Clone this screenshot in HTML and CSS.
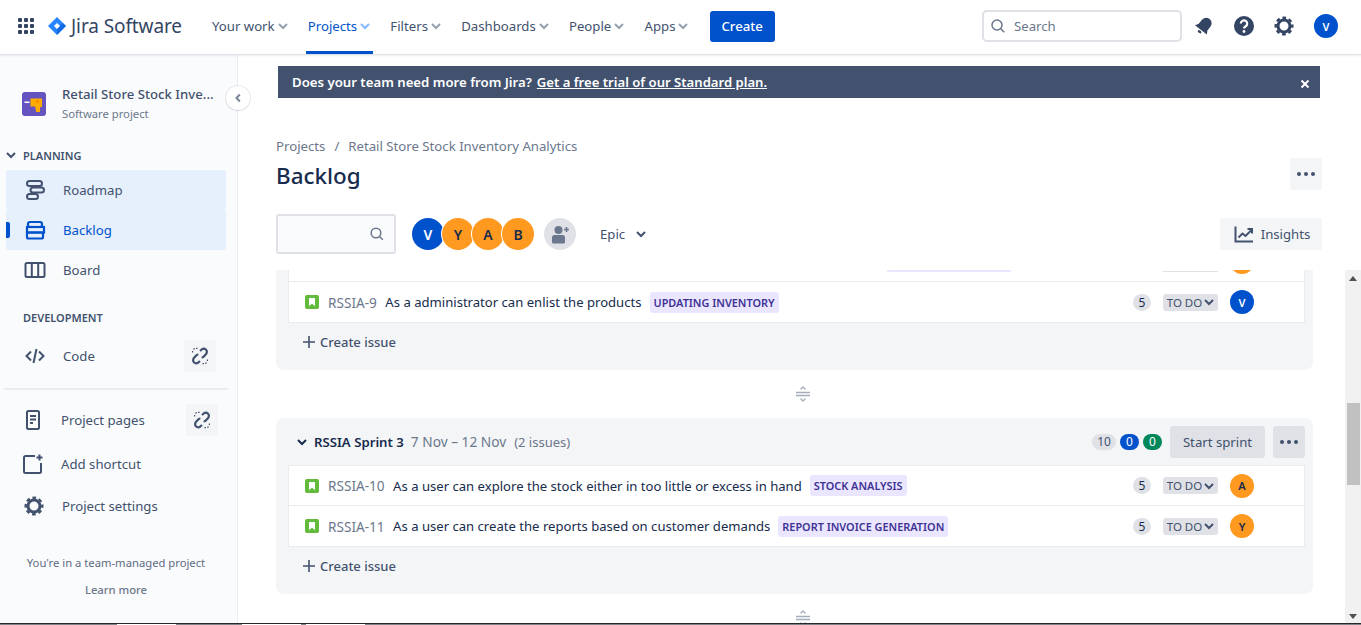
FILE: index.html
```html
<!DOCTYPE html>
<html lang="en">
<head>
<meta charset="utf-8">
<title>Backlog - Jira Software</title>
<link rel="stylesheet" href="styles.css">
</head>
<body>
<header class="topbar">
  <svg class="apps-icon" width="16" height="16" viewBox="0 0 16 16"><g fill="#344563"><rect x="0" y="0" width="4" height="4" rx="1"/><rect x="6" y="0" width="4" height="4" rx="1"/><rect x="12" y="0" width="4" height="4" rx="1"/><rect x="0" y="6" width="4" height="4" rx="1"/><rect x="6" y="6" width="4" height="4" rx="1"/><rect x="12" y="6" width="4" height="4" rx="1"/><rect x="0" y="12" width="4" height="4" rx="1"/><rect x="6" y="12" width="4" height="4" rx="1"/><rect x="12" y="12" width="4" height="4" rx="1"/></g></svg>
  <div class="brand">
    <svg width="18" height="18" viewBox="0 0 18 18"><path d="M9 0l9 9-9 9-9-9z" fill="#2684ff"/><path d="M9 18l9-9-3-3-6 6z" fill="#0052cc" opacity=".55"/><path d="M9 6l3 3-3 3-3-3z" fill="#fff"/></svg>
    <span class="brand-name">Jira Software</span>
  </div>
  <nav class="topnav">
    <a class="topnav-item">Your work<svg class="chev" width="12" height="12" viewBox="0 0 12 12"><path d="M2 4l4 4 4-4" fill="none" stroke="#97a0af" stroke-width="2"/></svg></a>
    <a class="topnav-item is-active">Projects<svg class="chev" width="12" height="12" viewBox="0 0 12 12"><path d="M2 4l4 4 4-4" fill="none" stroke="#85b8ff" stroke-width="2"/></svg></a>
    <a class="topnav-item">Filters<svg class="chev" width="12" height="12" viewBox="0 0 12 12"><path d="M2 4l4 4 4-4" fill="none" stroke="#97a0af" stroke-width="2"/></svg></a>
    <a class="topnav-item">Dashboards<svg class="chev" width="12" height="12" viewBox="0 0 12 12"><path d="M2 4l4 4 4-4" fill="none" stroke="#97a0af" stroke-width="2"/></svg></a>
    <a class="topnav-item">People<svg class="chev" width="12" height="12" viewBox="0 0 12 12"><path d="M2 4l4 4 4-4" fill="none" stroke="#97a0af" stroke-width="2"/></svg></a>
    <a class="topnav-item">Apps<svg class="chev" width="12" height="12" viewBox="0 0 12 12"><path d="M2 4l4 4 4-4" fill="none" stroke="#97a0af" stroke-width="2"/></svg></a>
  </nav>
  <button class="create-btn">Create</button>
  <div class="topbar-right">
    <div class="global-search">
      <svg width="16" height="16" viewBox="0 0 16 16"><circle cx="7" cy="7" r="5" fill="none" stroke="#6b778c" stroke-width="1.5"/><path d="M10.700 10.700l3.600 3.600" stroke="#6b778c" stroke-width="1.500"/></svg>
      <span>Search</span>
    </div>
    <svg class="top-icon bell" width="24" height="24" viewBox="0 0 24 24"><g fill="#344563" transform="rotate(38 12 12)"><path d="M12 3c-3.300 0-5.500 2.600-5.500 6v4.500L4.500 17h15l-2-3.500V9c0-3.400-2.200-6-5.500-6z"/><rect x="10" y="18" width="4" height="2.400" rx="1.200"/></g></svg>
    <svg class="top-icon help" width="24" height="24" viewBox="0 0 24 24"><circle cx="12" cy="12" r="10" fill="#344563"/><path d="M8.800 9.600a3.200 3.200 0 1 1 4.900 2.700c-1.100.7-1.700 1.100-1.700 2.300" fill="none" stroke="#fff" stroke-width="2.200"/><circle cx="12" cy="17.500" r="1.400" fill="#fff"/></svg>
    <svg class="top-icon gear" width="24" height="24" viewBox="0 0 24 24"><circle cx="12" cy="12" r="6" fill="none" stroke="#344563" stroke-width="3"/><circle cx="12" cy="12" r="8.300" fill="none" stroke="#344563" stroke-width="2.400" stroke-dasharray="3.700 2.820" stroke-dashoffset="1.850"/></svg>
    <span class="avatar avatar-top">V</span>
  </div>
</header>

<div class="workspace">
  <aside class="sidebar">
    <div class="project">
      <svg class="project-icon" width="24" height="24" viewBox="0 0 24 24"><rect width="24" height="24" rx="3" fill="#6554c0"/><path d="M2.500 9.500h5v1.500h-5z" fill="#fff"/><path d="M8.500 6.500h11.500v8.500h-2v5h-4l-.8-5.500h-4.700z" fill="#ffab00"/><rect x="14" y="8" width="3" height="3" fill="#ff8b00"/></svg>
      <div class="project-text">
        <div class="project-name">Retail Store Stock Inve...</div>
        <div class="project-type">Software project</div>
      </div>
    </div>
    <button class="collapse-btn" aria-label="Collapse"><svg width="10" height="10" viewBox="0 0 10 10"><path d="M6.800 1.500L3.500 5l3.300 3.500" fill="none" stroke="#7a869a" stroke-width="2"/></svg></button>

    <div class="side-heading">
      <svg class="heading-chev" width="10" height="10" viewBox="0 0 10 10"><path d="M1 3l4 4 4-4" fill="none" stroke="#42526e" stroke-width="2"/></svg>
      PLANNING
    </div>
    <a class="side-item is-selected">
      <svg class="side-icon" width="24" height="24" viewBox="0 0 24 24" fill="none" stroke="#42526e" stroke-width="2"><rect x="4" y="3" width="15" height="5" rx="2.500"/><rect x="7.500" y="9.500" width="13.500" height="5" rx="2.500"/><rect x="4" y="16" width="11" height="5" rx="2.500"/></svg>
      <span>Roadmap</span>
    </a>
    <a class="side-item is-selected is-current">
      <svg class="side-icon" width="24" height="24" viewBox="0 0 24 24" fill="none" stroke="#0052cc" stroke-width="2.200"><rect x="5" y="4" width="14" height="5" rx="2"/><rect x="4" y="9" width="17" height="5.500"/><rect x="4" y="14.500" width="16" height="6" rx="1.500"/></svg>
      <span>Backlog</span>
    </a>
    <a class="side-item">
      <svg class="side-icon" width="24" height="24" viewBox="0 0 24 24" fill="none" stroke="#42526e" stroke-width="2"><rect x="2.500" y="5" width="19" height="14" rx="1.500"/><path d="M8.800 5v14M15.200 5v14"/></svg>
      <span>Board</span>
    </a>

    <div class="side-heading side-heading-dev">DEVELOPMENT</div>
    <a class="side-item">
      <svg class="side-icon" width="24" height="24" viewBox="0 0 24 24" fill="none" stroke="#42526e" stroke-width="2"><path d="M8 7.500L3.500 12 8 16.500M16 7.500l4.500 4.500-4.500 4.500M13.500 5l-3 14"/></svg>
      <span>Code</span>
      <span class="link-box"><svg width="18" height="18" viewBox="0 0 18 18" fill="none" stroke="#42526e" stroke-width="2.200"><path d="M9 4l1.400-1.300a3.100 3.100 0 0 1 4.700 4.200l-2.300 2.600a3 3 0 0 1-2.200 1"/><path d="M9 14l-1.400 1.300a3.100 3.100 0 0 1-4.700-4.200l2.300-2.600a3 3 0 0 1 2.200-1"/><path d="M2.600 1.500l.9.900M5.800.8v1.200M1 4.800h1.200M15.400 16.500l-.9-.9M12.200 17.200V16M17 13.200h-1.200" stroke-width="1.500"/></svg></span>
    </a>

    <div class="side-divider"></div>

    <a class="side-item side-item-lower">
      <svg class="side-icon" width="24" height="24" viewBox="0 0 24 24" fill="none" stroke="#42526e" stroke-width="2"><rect x="6" y="3" width="12" height="18" rx="1.500"/><path d="M9 8h6M9 11.500h6M9 15h3"/></svg>
      <span>Project pages</span>
      <span class="link-box"><svg width="18" height="18" viewBox="0 0 18 18" fill="none" stroke="#42526e" stroke-width="2.200"><path d="M9 4l1.400-1.300a3.100 3.100 0 0 1 4.700 4.200l-2.300 2.600a3 3 0 0 1-2.200 1"/><path d="M9 14l-1.400 1.300a3.100 3.100 0 0 1-4.700-4.200l2.300-2.600a3 3 0 0 1 2.200-1"/><path d="M2.600 1.500l.9.900M5.800.8v1.200M1 4.800h1.200M15.400 16.500l-.9-.9M12.200 17.200V16M17 13.200h-1.200" stroke-width="1.500"/></svg></span>
    </a>
    <a class="side-item side-item-lower side-item-shortcut">
      <svg class="side-icon" width="24" height="24" viewBox="0 0 24 24" fill="none" stroke="#42526e" stroke-width="2"><path d="M15 4H5.500A1.500 1.500 0 0 0 4 5.500v14A1.500 1.500 0 0 0 5.500 21h14a1.500 1.500 0 0 0 1.500-1.500V11"/><path d="M19.500 2.500v6M16.500 5.500h6"/></svg>
      <span>Add shortcut</span>
    </a>
    <a class="side-item side-item-lower side-item-settings">
      <svg class="side-icon" width="24" height="24" viewBox="0 0 24 24"><circle cx="12" cy="12" r="6" fill="none" stroke="#42526e" stroke-width="3"/><circle cx="12" cy="12" r="8.300" fill="none" stroke="#42526e" stroke-width="2.400" stroke-dasharray="3.700 2.820" stroke-dashoffset="1.850"/></svg>
      <span>Project settings</span>
    </a>

    <p class="side-note">You're in a team-managed project</p>
    <p class="side-learn">Learn more</p>
  </aside>

  <main class="content">
    <div class="banner">
      <span class="banner-text">Does your team need more from Jira?</span>
      <a class="banner-link">Get a free trial of our Standard plan.</a>
      <svg class="banner-close" width="10" height="10" viewBox="0 0 10 10"><path d="M1.500 1.500l7 7M8.500 1.500l-7 7" stroke="#fff" stroke-width="2"/></svg>
    </div>

    <div class="breadcrumbs"><span>Projects</span><span class="crumb-sep">/</span><span>Retail Store Stock Inventory Analytics</span></div>

    <div class="page-head">
      <h1>Backlog</h1>
      <button class="more-btn more-light" aria-label="More"><i></i><i></i><i></i></button>
    </div>

    <div class="toolbar">
      <div class="filter-search"><svg width="16" height="16" viewBox="0 0 16 16"><circle cx="7" cy="7" r="4.800" fill="none" stroke="#6b778c" stroke-width="1.500"/><path d="M10.500 10.500l3.300 3.300" stroke="#6b778c" stroke-width="1.500"/></svg></div>
      <div class="avatar-stack">
        <span class="avatar avatar-lg avatar-blue">V</span>
        <span class="avatar avatar-lg avatar-orange">Y</span>
        <span class="avatar avatar-lg avatar-orange">A</span>
        <span class="avatar avatar-lg avatar-orange">B</span>
      </div>
      <span class="add-person"><svg width="24" height="24" viewBox="0 0 24 24"><circle cx="10.500" cy="8" r="4" fill="#6b778c"/><path d="M4 15.500a2.500 2.500 0 0 1 2.500-2.500h8a2.500 2.500 0 0 1 2.500 2.500V20a1.500 1.500 0 0 1-1.500 1.500h-10A1.500 1.500 0 0 1 4 20z" fill="#6b778c"/><path d="M18.500 5v5M16 7.500h5" stroke="#6b778c" stroke-width="1.600"/></svg></span>
      <span class="epic">Epic<svg width="12" height="12" viewBox="0 0 12 12"><path d="M2 4l4 4 4-4" fill="none" stroke="#42526e" stroke-width="2"/></svg></span>
      <button class="insights"><svg width="24" height="24" viewBox="0 0 24 24" fill="none" stroke="#42526e" stroke-width="2"><path d="M3.500 4.500V19.500H21"/><path d="M6.500 15.500l4-4 3 2.500 6-6"/><path d="M15.500 7h4.500v4.500"/></svg>Insights</button>
    </div>

    <div class="backlog-area">
      <div class="backlog-viewport">
        <div class="backlog-scroll">
          <section class="sprint sprint-clipped">
            <div class="issue">
              <span class="issue-spacer"></span>
              <span class="tag tag-clipped"></span>
              <span class="status status-clipped"></span>
              <span class="avatar avatar-orange"></span>
            </div>
            <div class="issue issue-last">
              <svg class="story" width="14" height="14" viewBox="0 0 14 14"><rect width="14" height="14" rx="2" fill="#63ba3c"/><path d="M4 3h6v8L7 8.800 4 11z" fill="#fff"/></svg>
              <span class="key">RSSIA-9</span>
              <span class="summary">As a administrator can enlist the products</span>
              <span class="tag">UPDATING INVENTORY</span>
              <span class="issue-spacer"></span>
              <span class="points">5</span>
              <span class="status">TO DO<svg width="10" height="10" viewBox="0 0 10 10"><path d="M1 3l4 4 4-4" fill="none" stroke="#42526e" stroke-width="2"/></svg></span>
              <span class="avatar avatar-blue">V</span>
            </div>
            <div class="create-issue"><svg width="14" height="14" viewBox="0 0 14 14"><path d="M7 1v12M1 7h12" stroke="#42526e" stroke-width="1.600"/></svg>Create issue</div>
          </section>

          <div class="handle"><svg width="16" height="16" viewBox="0 0 16 16" fill="none" stroke="#a5adba"><path d="M5.500 3.500L8 1l2.500 2.500M5.500 12.500L8 15l2.500-2.500" stroke-width="1.300"/><path d="M1 6.500h14M1 9.500h14" stroke-width="1.500"/></svg></div>

          <section class="sprint">
            <div class="sprint-head">
              <svg class="sprint-chev" width="10" height="10" viewBox="0 0 10 10"><path d="M1 3l4 4 4-4" fill="none" stroke="#172b4d" stroke-width="2"/></svg>
              <span class="sprint-name">RSSIA Sprint 3</span>
              <span class="sprint-dates">7 Nov – 12 Nov</span>
              <span class="sprint-count">(2 issues)</span>
              <span class="issue-spacer"></span>
              <span class="count count-grey">10</span>
              <span class="count count-blue">0</span>
              <span class="count count-green">0</span>
              <button class="start-sprint">Start sprint</button>
              <button class="more-btn more-dark" aria-label="More"><i></i><i></i><i></i></button>
            </div>
            <div class="issue">
              <svg class="story" width="14" height="14" viewBox="0 0 14 14"><rect width="14" height="14" rx="2" fill="#63ba3c"/><path d="M4 3h6v8L7 8.800 4 11z" fill="#fff"/></svg>
              <span class="key">RSSIA-10</span>
              <span class="summary">As a user can explore the stock either in too little or excess in hand</span>
              <span class="tag">STOCK ANALYSIS</span>
              <span class="issue-spacer"></span>
              <span class="points">5</span>
              <span class="status">TO DO<svg width="10" height="10" viewBox="0 0 10 10"><path d="M1 3l4 4 4-4" fill="none" stroke="#42526e" stroke-width="2"/></svg></span>
              <span class="avatar avatar-orange">A</span>
            </div>
            <div class="issue issue-last">
              <svg class="story" width="14" height="14" viewBox="0 0 14 14"><rect width="14" height="14" rx="2" fill="#63ba3c"/><path d="M4 3h6v8L7 8.800 4 11z" fill="#fff"/></svg>
              <span class="key">RSSIA-11</span>
              <span class="summary">As a user can create the reports based on customer demands</span>
              <span class="tag">REPORT INVOICE GENERATION</span>
              <span class="issue-spacer"></span>
              <span class="points">5</span>
              <span class="status">TO DO<svg width="10" height="10" viewBox="0 0 10 10"><path d="M1 3l4 4 4-4" fill="none" stroke="#42526e" stroke-width="2"/></svg></span>
              <span class="avatar avatar-orange">Y</span>
            </div>
            <div class="create-issue"><svg width="14" height="14" viewBox="0 0 14 14"><path d="M7 1v12M1 7h12" stroke="#42526e" stroke-width="1.600"/></svg>Create issue</div>
          </section>

          <div class="handle"><svg width="16" height="16" viewBox="0 0 16 16" fill="none" stroke="#a5adba"><path d="M5.500 3.500L8 1l2.500 2.500M5.500 12.500L8 15l2.500-2.500" stroke-width="1.300"/><path d="M1 6.500h14M1 9.500h14" stroke-width="1.500"/></svg></div>
        </div>
      </div>
      <div class="scrollbar">
        <span class="arrow-up"></span>
        <span class="thumb"></span>
        <span class="arrow-down"></span>
      </div>
    </div>
  </main>
</div>

<div class="screen-edge"><i></i><i></i><i></i></div>
</body>
</html>
```

FILE: styles.css
```css
* { box-sizing: border-box; }
html, body { height: 100%; }
body {
  margin: 0;
  height: 625px;
  overflow: hidden;
  display: flex;
  flex-direction: column;
  background: #fff;
  color: #42526e;
  font-family: "Noto Sans", "Open Sans", sans-serif;
  font-size: 13.2px;
}
a { color: inherit; text-decoration: none; }
button { font-family: inherit; border: 0; cursor: pointer; }
svg { display: block; flex-shrink: 0; }

/* Top bar */
.topbar {
  height: 55px;
  flex-shrink: 0;
  display: flex;
  align-items: center;
  padding: 0 0 2px 18px;
  border-bottom: 1px solid #dfe1e6;
  box-shadow: 0 1px 2px rgba(9, 30, 66, .08);
  position: relative;
  z-index: 3;
}
.brand { display: flex; align-items: center; margin-left: 14px; gap: 5px; }
.brand-name { font-size: 19px; color: #344563; font-weight: 400; letter-spacing: -.1px; }
.topnav { display: flex; align-self: stretch; margin: 0 0 -2px 28px; }
.topnav-item {
  display: flex;
  align-items: center;
  padding: 1px 2px 0;
  margin-right: 15.200px;
  gap: 2px;
  border-bottom: 3px solid transparent;
  color: #42526e;
}
.topnav-item.is-active { color: #0052cc; border-bottom-color: #0052cc; }
.create-btn {
  width: 65px;
  height: 31px;
  margin-left: 3px;
  background: #0052cc;
  color: #fff;
  border-radius: 3px;
  font-size: 13.2px;
  font-weight: 500;
  padding: 0;
}
.topbar-right { margin-left: auto; display: flex; align-items: center; padding-right: 23px; }
.global-search {
  width: 200px;
  height: 32px;
  border: 2px solid #dfe1e6;
  border-radius: 5px;
  display: flex;
  align-items: center;
  gap: 8px;
  padding-left: 6px;
  color: #6b778c;
  margin-right: 2px;
}
.top-icon { margin: 0 8px; }
.avatar {
  width: 24px;
  height: 24px;
  border-radius: 50%;
  display: flex;
  align-items: center;
  justify-content: center;
  font-size: 11px;
  font-weight: 600;
  flex-shrink: 0;
}
.avatar-top { background: #0052cc; color: #fff; margin-left: 10px; }
.avatar-blue { background: #0052cc; color: #fff; }
.avatar-orange { background: #ff991f; color: #172b4d; }

/* Layout */
.workspace { flex: 1; min-height: 0; display: flex; }

/* Sidebar */
.sidebar {
  width: 238px;
  flex-shrink: 0;
  background: #fafbfc;
  border-right: 1px solid #ebecf0;
  padding: 0 0 0 6px;
  position: relative;
}
.project {
  display: flex;
  align-items: center;
  gap: 16px;
  height: 44px;
  margin-top: 27px;
  padding-left: 16px;
}
.project-name { line-height: 20px; color: #42526e; font-weight: 500; white-space: nowrap; }
.project-type { font-size: 11.25px; line-height: 20px; color: #6b778c; }
.collapse-btn {
  position: absolute;
  top: 31px;
  right: -13px;
  width: 24px;
  height: 24px;
  border-radius: 50%;
  background: #fff;
  box-shadow: 0 0 0 1px rgba(9, 30, 66, .08), 0 1px 2px rgba(9, 30, 66, .08);
  display: flex;
  align-items: center;
  justify-content: center;
  padding: 0;
  z-index: 2;
}
.side-heading {
  height: 20px;
  margin-top: 19px;
  margin-bottom: 5px;
  padding-left: 17px;
  display: flex;
  align-items: center;
  font-size: 11px;
  font-weight: 600;
  color: #42526e;
  position: relative;
}
.heading-chev { position: absolute; left: 0; top: 5px; }
.side-heading-dev { margin-top: 17px; margin-bottom: 9px; }
.side-item {
  position: relative;
  width: 220px;
  height: 40px;
  display: flex;
  align-items: center;
  gap: 16px;
  padding-left: 17px;
  border-radius: 3px;
  color: #42526e;
}
.side-item.is-selected { background: #e6effc; }
.side-item.is-current { color: #0052cc; }
.side-item.is-current::before {
  content: "";
  position: absolute;
  left: 0;
  top: 12px;
  width: 4px;
  height: 16px;
  background: #0052cc;
  border-radius: 0 2px 2px 0;
}
.link-box {
  position: absolute;
  right: 10px;
  top: 4px;
  width: 32px;
  height: 32px;
  background: #f4f5f7;
  border-radius: 3px;
  display: flex;
  align-items: center;
  justify-content: center;
}
.side-divider { height: 2px; background: #ebecf0; width: 224px; margin: 12px 0 10px -2px; }
.side-item-lower { padding-left: 15px; }
.side-item-lower .link-box { right: 8px; }
.side-item-shortcut { margin-top: 4px; padding-left: 14px; gap: 17px; }
.side-item-settings { margin-top: 2px; padding-left: 16px; }
.side-note { margin: 27px 0 0 -6px; font-size: 11.25px; line-height: 20px; text-align: center; width: 232px; color: #5e6c84; }
.side-learn { margin: 7px 0 0 -6px; font-size: 11.25px; line-height: 20px; text-align: center; width: 232px; color: #6b778c; font-weight: 500; }

/* Content */
.content {
  flex: 1;
  min-width: 0;
  display: flex;
  flex-direction: column;
  padding: 11px 39px 0 38px;
}
.banner {
  height: 32px;
  margin: 0 2px;
  flex-shrink: 0;
  background: #42526e;
  color: #fff;
  display: flex;
  align-items: center;
  padding: 0 10px 0 14px;
  font-weight: 600;
  gap: 5px;
}
.banner-link { text-decoration: underline; font-size: 13.1px; }
.banner-close { margin-left: auto; margin-top: 4px; }
.breadcrumbs {
  margin-top: 38px;
  height: 20px;
  line-height: 20px;
  color: #6b778c;
  display: flex;
  gap: 9px;
  flex-shrink: 0;
}
.page-head {
  margin-top: 2px;
  height: 34px;
  display: flex;
  justify-content: space-between;
  align-items: flex-start;
  flex-shrink: 0;
}
h1 { margin: 2px 0 0; font-size: 22.4px; line-height: 32px; font-weight: 500; color: #172b4d; }
.more-btn {
  width: 32px;
  height: 32px;
  border-radius: 3px;
  display: flex;
  align-items: center;
  justify-content: center;
  gap: 3px;
  padding: 0;
}
.more-btn i { width: 4px; height: 4px; border-radius: 50%; background: #42526e; }
.more-light { background: #f4f5f7; }
.more-dark { background: #dfe1e6; margin-left: 8px; }

.toolbar {
  margin-top: 22px;
  height: 40px;
  display: flex;
  align-items: center;
  flex-shrink: 0;
}
.filter-search {
  width: 120px;
  height: 40px;
  background: #fafbfc;
  border: 2px solid #dfe1e6;
  border-radius: 3px;
  display: flex;
  align-items: center;
  justify-content: flex-end;
  padding-right: 9px;
}
.avatar-stack { display: flex; margin-left: 16px; }
.avatar-lg { width: 32px; height: 32px; font-size: 14px; margin-right: -2px; box-shadow: 0 0 0 1px #fff; }
.add-person {
  width: 32px;
  height: 32px;
  margin-left: 12px;
  border-radius: 50%;
  background: #dfe1e6;
  display: flex;
  align-items: center;
  justify-content: center;
}
.epic { margin-left: 24px; display: flex; align-items: center; gap: 10px; color: #42526e; }
.insights {
  margin-left: auto;
  width: 102px;
  height: 32px;
  background: #f4f5f7;
  border-radius: 3px;
  display: flex;
  align-items: center;
  justify-content: center;
  gap: 5px;
  font-size: 13.2px;
  color: #42526e;
  padding: 0;
}

/* Backlog */
.backlog-area {
  margin: 16px -39px 0 0;
  flex: 1;
  min-height: 0;
  display: flex;
  justify-content: space-between;
}
.backlog-viewport { width: 1037px; overflow: hidden; }
.backlog-scroll { margin-top: -29px; }
.sprint { background: #f4f5f7; border-radius: 8px; padding: 0 8px 0 12px; }
.sprint-clipped { border-radius: 0 0 8px 8px; }
.sprint-head {
  height: 47px;
  margin-left: -12px;
  padding-left: 21px;
  display: flex;
  align-items: center;
}
.sprint-chev { margin-right: 7px; }
.sprint-name { font-weight: 600; color: #172b4d; font-size: 13.2px; }
.sprint-dates { margin-left: 7px; color: #6b778c; font-size: 13.7px; }
.sprint-count { margin-left: 8px; color: #6b778c; font-size: 13px; }
.issue-spacer { flex: 1; }
.count {
  height: 16px;
  min-width: 19px;
  padding: 0 5px;
  border-radius: 8px;
  display: flex;
  align-items: center;
  justify-content: center;
  font-size: 12px;
  margin-right: 4px;
}
.count-grey { background: #dfe1e6; color: #42526e; min-width: 24px; }
.count-blue { background: #0052cc; color: #fff; }
.count-green { background: #00875a; color: #fff; }
.start-sprint {
  width: 95px;
  height: 32px;
  margin-left: 4px;
  background: #dfe1e6;
  border-radius: 3px;
  color: #42526e;
  font-size: 13.2px;
  padding: 0;
}
.issue {
  height: 40px;
  background: #fff;
  border: 1px solid #ebecf0;
  border-bottom: 0;
  display: flex;
  align-items: center;
  padding-left: 16px;
  padding-right: 50px;
  position: relative;
}
.issue-last { height: 42px; border-bottom: 1px solid #ebecf0; }
.story { margin-right: 9px; }
.key { color: #6b778c; font-size: 13.6px; margin-right: 8.500px; white-space: nowrap; }
.summary { color: #172b4d; font-size: 13.1px; white-space: nowrap; }
.tag {
  margin-left: 8px;
  height: 21px;
  padding: 0 4px;
  border-radius: 3px;
  background: #eae6ff;
  color: #403294;
  font-size: 10.9px;
  font-weight: 600;
  display: flex;
  align-items: center;
  white-space: nowrap;
}
.tag-clipped { margin-left: 0; position: absolute; left: 597px; width: 126px; }
.points {
  width: 18px;
  height: 17px;
  border-radius: 9px;
  background: #dfe1e6;
  color: #172b4d;
  font-size: 12px;
  display: flex;
  align-items: center;
  justify-content: center;
}
.status {
  margin-left: 12px;
  width: 55px;
  height: 17px;
  border-radius: 3px;
  background: #dfe1e6;
  color: #42526e;
  font-size: 11.5px;
  display: flex;
  align-items: center;
  justify-content: center;
  gap: 2px;
}
.status-clipped { background: #fff; border-bottom: 1px solid #dfe1e6; height: 20px; border-radius: 0; }
.issue .avatar { margin-left: 12px; }
.create-issue {
  height: 47px;
  padding: 0 0 9px 14px;
  display: flex;
  align-items: center;
  gap: 4px;
  color: #42526e;
  font-size: 13px;
  font-weight: 500;
}
.handle { height: 48px; padding-left: 17px; display: flex; align-items: center; justify-content: center; }

.scrollbar {
  width: 16px;
  background: #f1f1f1;
  display: flex;
  flex-direction: column;
  align-items: center;
  position: relative;
}
.arrow-up {
  margin-top: 6px;
  border: 4px solid transparent;
  border-top: 0;
  border-bottom: 5px solid #505050;
}
.thumb { width: 13px; height: 82px; margin: 122px 0 0; background: #c1c1c1; }
.arrow-down {
  margin-top: auto;
  margin-bottom: 4px;
  border: 4px solid transparent;
  border-bottom: 0;
  border-top: 5px solid #505050;
}

/* Edge of the captured screen */
.screen-edge {
  height: 2px;
  flex-shrink: 0;
  background: #7f8487;
  border-top: 1px solid #26292b;
  display: flex;
}
.screen-edge i { height: 1px; width: 59px; background: #fff; margin-left: 5px; }
.screen-edge i:first-child { margin-left: 117px; }
.screen-edge i:nth-child(2) { margin-left: 66px; }
```
